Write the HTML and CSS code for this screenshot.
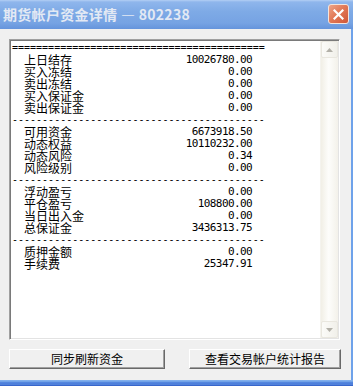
FILE: index.html
```html
<!DOCTYPE html>
<html lang="zh-CN">
<head>
    <meta charset="UTF-8">
    <title>期货帐户资金详情</title>
    <link rel="stylesheet" href="styles.css">
</head>
<body>
    <div class="window">
        <div class="titlebar">
            <span class="title">期货帐户资金详情 — 802238</span>
            <button class="close-btn" title="关闭">
                <svg width="11" height="11" viewBox="0 0 11 11">
                    <path d="M1.5 1.5 L9.5 9.5 M9.5 1.5 L1.5 9.5" stroke="#fff" stroke-width="2.2" stroke-linecap="square"/>
                </svg>
            </button>
        </div>

        <div class="frame">
            <div class="client">
                <!-- Account report -->
                <div class="report-box">
                    <div class="report">
                        <div class="rule">==========================================</div>
                        <div class="line"><span class="label">上日结存</span><span class="num">10026780.00</span></div>
                        <div class="line"><span class="label">买入冻结</span><span class="num">0.00</span></div>
                        <div class="line"><span class="label">卖出冻结</span><span class="num">0.00</span></div>
                        <div class="line"><span class="label">买入保证金</span><span class="num">0.00</span></div>
                        <div class="line"><span class="label">卖出保证金</span><span class="num">0.00</span></div>
                        <div class="rule">------------------------------------------</div>
                        <div class="line"><span class="label">可用资金</span><span class="num">6673918.50</span></div>
                        <div class="line"><span class="label">动态权益</span><span class="num">10110232.00</span></div>
                        <div class="line"><span class="label">动态风险</span><span class="num">0.34</span></div>
                        <div class="line"><span class="label">风险级别</span><span class="num">0.00</span></div>
                        <div class="rule">------------------------------------------</div>
                        <div class="line"><span class="label">浮动盈亏</span><span class="num">0.00</span></div>
                        <div class="line"><span class="label">平仓盈亏</span><span class="num">108800.00</span></div>
                        <div class="line"><span class="label">当日出入金</span><span class="num">0.00</span></div>
                        <div class="line"><span class="label">总保证金</span><span class="num">3436313.75</span></div>
                        <div class="rule">------------------------------------------</div>
                        <div class="line"><span class="label">质押金额</span><span class="num">0.00</span></div>
                        <div class="line"><span class="label">手续费</span><span class="num">25347.91</span></div>
                    </div>

                    <div class="scrollbar">
                        <div class="scroll-btn">
                            <svg width="7" height="4" viewBox="0 0 7 4"><path d="M3.5 0 L7 4 L0 4 Z" fill="#b2b0a8"/></svg>
                        </div>
                        <div class="scroll-track"></div>
                        <div class="scroll-btn">
                            <svg width="7" height="4" viewBox="0 0 7 4"><path d="M0 0 L7 0 L3.5 4 Z" fill="#b2b0a8"/></svg>
                        </div>
                    </div>
                </div>

                <div class="actions">
                    <button class="btn btn-sync">同步刷新资金</button>
                    <button class="btn btn-report">查看交易帐户统计报告</button>
                </div>
            </div>
        </div>
        <div class="frame-bottom"></div>
    </div>
</body>
</html>
```

FILE: styles.css
```css
/* Base styles */
body {
    margin: 0;
    font-family: "Noto Sans CJK SC", "Noto Sans", sans-serif;
    font-size: 12px;
    background: #ffffff;
}

.window {
    width: 353px;
    height: 386px;
    display: flex;
    flex-direction: column;
    overflow: hidden;
}

/* Title bar (inactive XP caption) */
.titlebar {
    height: 29px;
    flex: none;
    display: flex;
    align-items: center;
    justify-content: space-between;
    padding: 0 4px 0 3px;
    box-sizing: border-box;
    background: linear-gradient(#b3cff4 0, #8fb6ec 2px, #7eaae6 40%, #76a3e3 80%, #6594dc 100%);
}

.title {
    color: #e3e9f4;
    font-weight: bold;
    font-size: 14px;
    line-height: 14px;
    letter-spacing: 0.3px;
    margin-top: -1px;
    white-space: nowrap;
}

.close-btn {
    width: 21px;
    height: 20px;
    padding: 0;
    margin-top: -1px;
    border: 1px solid #f3e4dc;
    border-radius: 3px;
    background: linear-gradient(135deg, #eda58a 0%, #e27a58 45%, #cf5638 100%);
    display: flex;
    align-items: center;
    justify-content: center;
}

/* Window body */
.frame {
    flex: 1;
    display: flex;
    border-right: 2px solid #6ea2ea;
}

.client {
    flex: 1;
    background: #f0f0f0;
    padding: 10px 10px 0 9px;
}

.frame-bottom {
    height: 6px;
    flex: none;
    background: linear-gradient(#8ab6ee 0, #6a9de6 2px, #3e70d6 3px, #5d8fe2 4px, #2c58c4 6px);
}

/* Report edit box */
.report-box {
    width: 331px;
    height: 301px;
    box-sizing: border-box;
    display: flex;
    background: #ffffff;
    border: 1px solid;
    border-color: #a0a0a0 #ffffff #ffffff #a0a0a0;
    box-shadow: inset 1px 1px #7a7a7a, inset -1px -1px #e3e3e3;
    padding: 1px;
}

.report {
    flex: 1;
    padding: 1px 0 0 1px;
    color: #000000;
}

.rule {
    font-family: "DejaVu Sans Mono", "Liberation Mono", monospace;
    font-size: 10px;
    line-height: 12px;
    white-space: pre;
}

.line {
    width: 240px;
    height: 12px;
    display: flex;
    justify-content: space-between;
    line-height: 12px;
}

.label {
    padding-left: 12px;
    font-size: 12px;
}

.num {
    font-family: "DejaVu Sans Mono", "Liberation Mono", monospace;
    font-size: 11px;
    letter-spacing: -0.6px;
}

/* Scrollbar */
.scrollbar {
    width: 17px;
    display: flex;
    flex-direction: column;
    background: linear-gradient(to right, #f1efe6, #fdfdfb 45%, #f3f1ea);
    border-left: 1px solid #f4f3ee;
}

.scroll-btn {
    height: 17px;
    box-sizing: border-box;
    border: 1px solid #e9e7df;
    border-radius: 2px;
    background: linear-gradient(to right, #fbfbf8, #f1f0ea);
    display: flex;
    align-items: center;
    justify-content: center;
}

.scroll-track {
    flex: 1;
}

/* Buttons */
.actions {
    display: flex;
    justify-content: space-between;
    margin-top: 9px;
}

.btn {
    height: 20px;
    padding: 0;
    font-family: "Noto Sans CJK SC", "Noto Sans", sans-serif;
    font-size: 12px;
    line-height: 16px;
    color: #000000;
    background: #f0f0f0;
    border: 1px solid;
    border-color: #ffffff #696969 #696969 #ffffff;
    box-shadow: inset -1px -1px #a0a0a0;
}

.btn-sync {
    width: 156px;
}

.btn-report {
    width: 152px;
}
```
